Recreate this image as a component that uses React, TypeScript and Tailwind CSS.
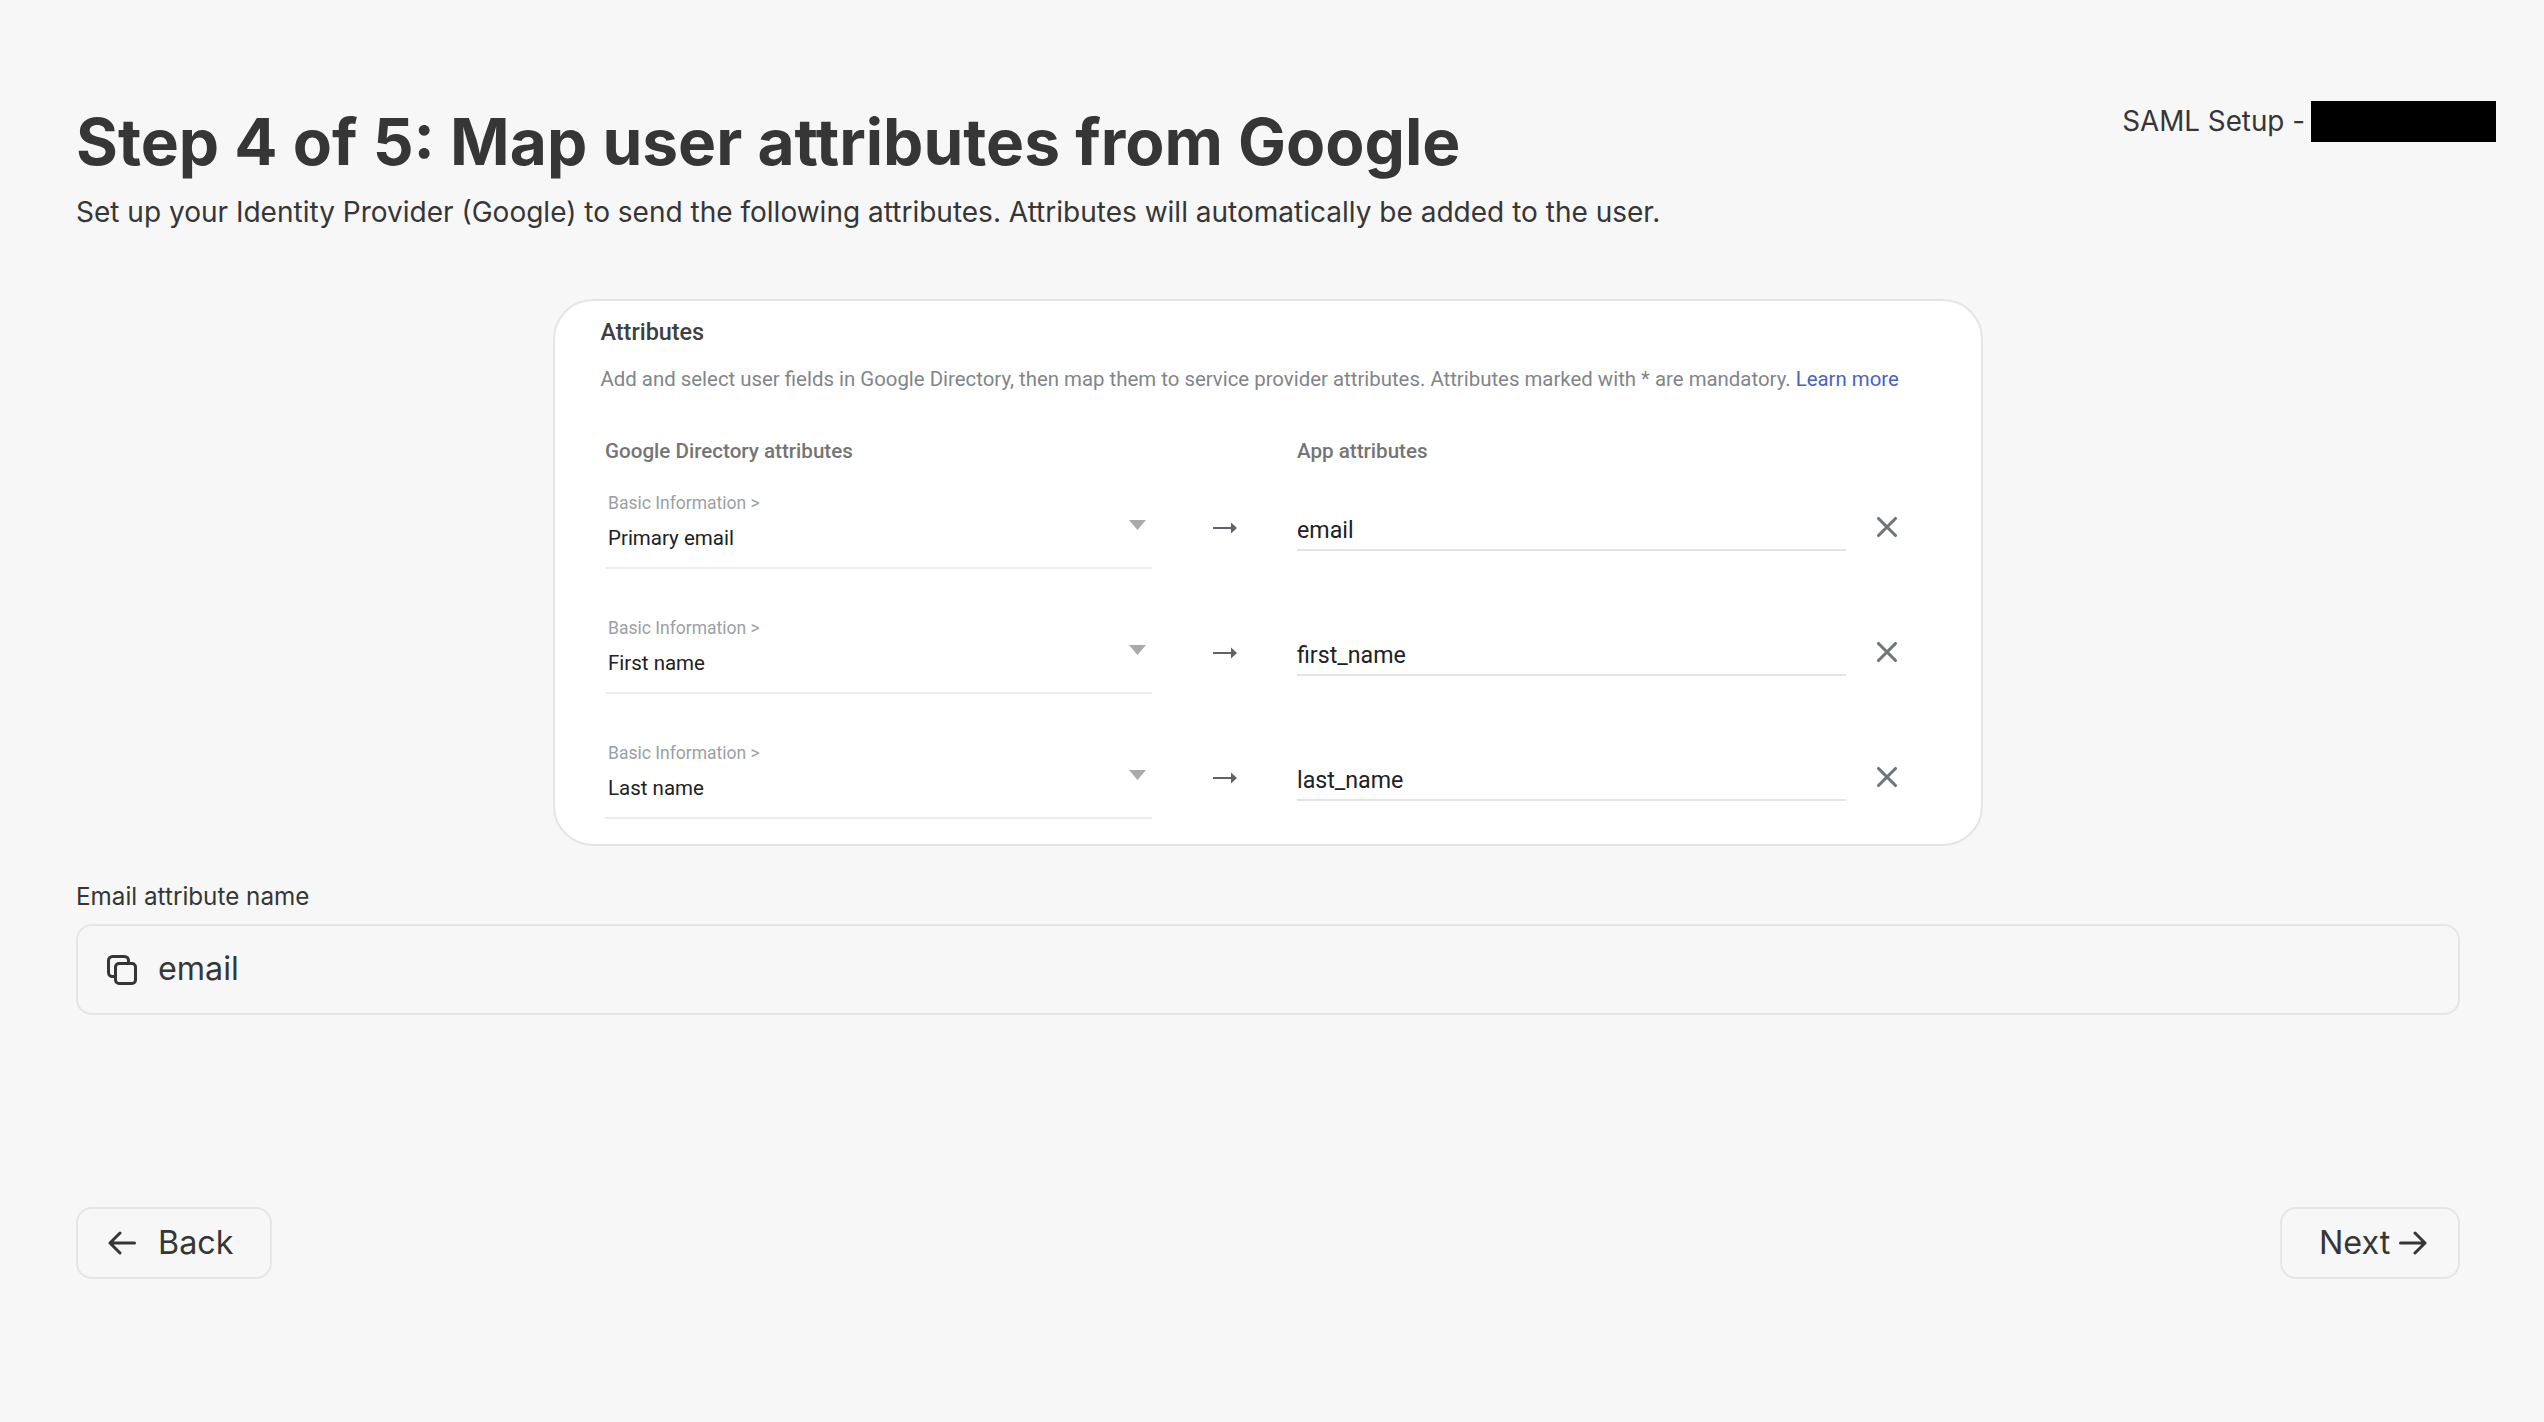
import * as React from 'react';
import { X } from 'lucide-react';

const rows = [
  { source: 'Primary email', target: 'email' },
  { source: 'First name', target: 'first_name' },
  { source: 'Last name', target: 'last_name' },
];

const CopyIcon = () => (
  <svg width="30" height="30" viewBox="0 0 30 30" fill="none" stroke="#363636" strokeWidth="3" strokeLinecap="round" strokeLinejoin="round">
    <rect x="8.5" y="8.5" width="20" height="20" rx="3.5" />
    <path d="M7 21.5H5.5A4 4 0 0 1 1.5 17.5V5.5A4 4 0 0 1 5.5 1.5H17.5A4 4 0 0 1 21.5 5.5V7" />
  </svg>
);

const BackArrow = () => (
  <svg width="28" height="24" viewBox="0 0 28 24" fill="none" stroke="#363636" strokeWidth="3" strokeLinecap="round" strokeLinejoin="round">
    <path d="M26.5 12H2M12 2L2 12L12 22" />
  </svg>
);

const NextArrow = () => (
  <svg width="28" height="24" viewBox="0 0 28 24" fill="none" stroke="#363636" strokeWidth="3" strokeLinecap="round" strokeLinejoin="round">
    <path d="M1.5 12H26M16 2L26 12L16 22" />
  </svg>
);

const MapArrow = () => (
  <svg width="24" height="14" viewBox="0 0 24 14" className="block">
    <path d="M0 6H18V1.5L24 7L18 12.5V8H0Z" fill="#5f6368" />
  </svg>
);

const Row = ({ source, target }: { source: string; target: string }) => (
  <div className="flex items-start h-[79px] [font-family:Roboto,sans-serif]">
    <div className="w-[547px] h-[79px] flex border-b-2 border-[#eeeeee] pl-[3px] pr-[6px]">
      <div className="flex-1">
        <div className="text-[17.5px] leading-[26px] text-[#9aa0a6]">Basic Information &gt;</div>
        <div className="text-[20.5px] leading-[44px] text-[#202124]">{source}</div>
      </div>
      <svg width="17" height="10" viewBox="0 0 17 10" className="mt-[30px]">
        <polygon points="0,0 17,0 8.5,10" fill="#aaaaaa" />
      </svg>
    </div>
    <div className="ml-[61px] mt-[31px]">
      <MapArrow />
    </div>
    <div className="ml-[60px] mt-[18px] w-[549px] h-[43px] border-b-2 border-[#e4e4e4] text-[23.2px] leading-[44px] text-[#202124]">
      {target}
    </div>
    <div className="ml-[24px] mt-[20px] text-[#70757a]">
      <X size={34} strokeWidth={2.2} />
    </div>
  </div>
);

export default function App() {
  return (
    <div className="min-h-[1422px] bg-[#f7f7f7] pl-[76px] pr-[48px] pt-[101px] text-[#363636] [font-family:Inter,sans-serif]">
      <header className="flex items-start justify-between">
        <div>
          <h1 className="-mt-[1px] text-[64px] leading-[84px] font-bold">Step 4 of 5: Map user attributes from Google</h1>
          <p className="mt-[8px] text-[28.03px] leading-[40px]">
            Set up your Identity Provider (Google) to send the following attributes. Attributes will automatically be added to the user.
          </p>
        </div>
        <div className="flex items-center gap-[6px] text-[27.8px] leading-[41px]">
          <span>SAML Setup -</span>
          <span className="block w-[185px] h-[41px] bg-black" />
        </div>
      </header>

      <div className="mr-[36px]">
        <section className="mx-auto mt-[67px] w-[1430px] rounded-[40px] border-2 border-[#e5e5e5] bg-white pt-[16px] pb-[25px] [font-family:Roboto,sans-serif]">
          <div className="pl-[45.5px]">
            <h2 className="text-[23.4px] leading-[30px] font-medium text-[#3c4043]">Attributes</h2>
            <p className="mt-[17px] text-[20.4px] leading-[30px] text-[#80868b]">
              Add and select user fields in Google Directory, then map them to service provider attributes. Attributes marked with * are mandatory.{' '}
              <span className="text-[#4a61c8]">Learn more</span>
            </p>
          </div>
          <div className="pl-[50px]">
            <div className="mt-[42px] flex text-[20.6px] leading-[30px] font-medium text-[#757575]">
              <div className="w-[692px]">Google Directory attributes</div>
              <div>App attributes</div>
            </div>
            <div className="mt-[24px] flex flex-col gap-[46px]">
              {rows.map((r) => (
                <Row key={r.target} source={r.source} target={r.target} />
              ))}
            </div>
          </div>
        </section>

        <label className="mt-[35px] block text-[24.25px] leading-[32px]">Email attribute name</label>
        <div className="mt-[11px] flex h-[91px] items-center rounded-[16px] border-2 border-[#e5e5e5] pl-[29px] text-[32.3px]">
          <CopyIcon />
          <span className="ml-[21px]">email</span>
        </div>

        <div className="mt-[192px] flex items-center justify-between">
          <button className="flex h-[72px] w-[196px] items-center rounded-[16px] border-2 border-[#e5e5e5] pl-[30px] text-[32.3px]">
            <BackArrow />
            <span className="ml-[22px]">Back</span>
          </button>
          <button className="flex h-[72px] w-[180px] items-center rounded-[16px] border-2 border-[#e5e5e5] pl-[37px] text-[32.3px]">
            <span>Next</span>
            <span className="ml-[9px]">
              <NextArrow />
            </span>
          </button>
        </div>
      </div>
    </div>
  );
}
